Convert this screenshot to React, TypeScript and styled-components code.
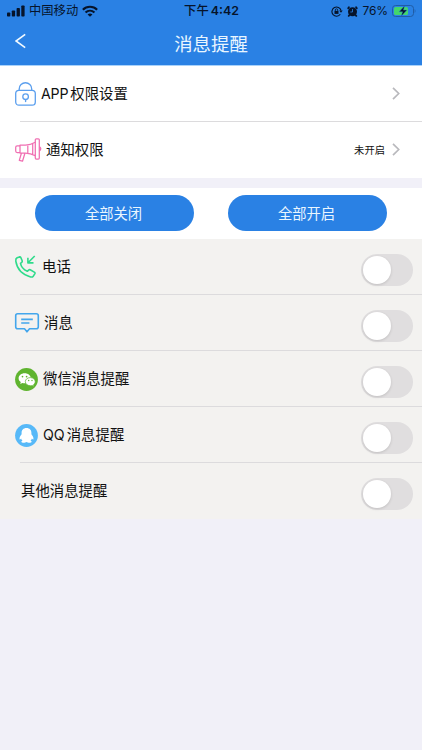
import React from "react";
import styled, { createGlobalStyle } from "styled-components";

const GlobalStyle = createGlobalStyle`
  * { box-sizing: border-box; }
  body {
    margin: 0;
    background: #f1f0f8;
    color: #111;
    font-family: Inter, "Noto Sans CJK SC", sans-serif;
  }
`;

const Screen = styled.main`
  width: 422px;
  height: 750px;
  overflow: hidden;
  background: #f1f0f8;
`;

const Header = styled.header`
  height: 66px;
  background: #2a81e4;
  border-bottom: 1px solid #a9d2fa;
`;

const StatusBar = styled.div`
  height: 22px;
  padding: 0 6px 0 7px;
  display: grid;
  grid-template-columns: 1fr auto 1fr;
  align-items: center;
  color: #06142b;
  font-size: 12.3px;
  line-height: 22px;
  white-space: nowrap;
`;

const StatusGroup = styled.div<{ $end?: boolean }>`
  height: 22px;
  display: flex;
  align-items: center;
  justify-content: ${(p) => (p.$end ? "flex-end" : "flex-start")};
  gap: 4px;
`;

const Percent = styled.span`
  font-size: 12px;
  letter-spacing: -0.1px;
`;

const Clock = styled.div`
  display: flex;
  gap: 2px;
  font-weight: 500;
  b { font-weight: 600; font-size: 12.4px; }
`;

const NavBar = styled.div`
  height: 43px;
  padding: 0 15px;
  display: grid;
  grid-template-columns: 40px 1fr 40px;
  align-items: center;
`;

const BackButton = styled.button`
  width: 12px;
  height: 16px;
  padding: 0;
  margin-bottom: 6px;
  border: 0;
  background: none;
  svg { display: block; }
`;

const Title = styled.h1`
  margin: 0;
  padding-top: 1px;
  text-align: center;
  color: #e9f6ff;
  font-size: 18.4px;
  font-weight: 400;
  line-height: 42px;
`;

const Group = styled.section<{ $tone: string }>`
  background: ${(p) => p.$tone};
`;

const Row = styled.div<{ $last?: boolean }>`
  position: relative;
  height: 56px;
  padding: 0 9px 0 15px;
  display: flex;
  align-items: center;
  &::after {
    content: "";
    display: ${(p) => (p.$last ? "none" : "block")};
    position: absolute;
    left: 20px;
    right: 0;
    bottom: 0;
    height: 1px;
    background: #dcdbdd;
  }
`;

const IconSlot = styled.span<{ $width: number }>`
  width: ${(p) => p.$width}px;
  flex: none;
  display: flex;
  svg { display: block; overflow: visible; }
`;

const Label = styled.span`
  flex: 1;
  display: flex;
  gap: 2px;
  font-size: 14.4px;
  line-height: 22px;
  white-space: nowrap;
`;

const Latin = styled.span<{ $tight?: boolean }>`
  font-size: 14.2px;
  letter-spacing: ${(p) => (p.$tight ? "-0.2px" : "0")};
`;

const Value = styled.span`
  font-size: 10.3px;
  margin: 0 7px 2px 0;
`;

const ChevronSlot = styled.span`
  display: flex;
  margin: 0 13px 2px 0;
`;

const Actions = styled.div`
  height: 51px;
  margin-top: 10px;
  padding: 7px 35px 0;
  display: flex;
  justify-content: space-between;
  background: #fff;
`;

const PillButton = styled.button`
  width: 159px;
  height: 36px;
  padding: 2px 2px 0 0;
  border: 0;
  border-radius: 18px;
  background: #2a81e4;
  color: #e9f6ff;
  font: inherit;
  font-size: 14.3px;
  line-height: 34px;
`;

const Toggle = styled.button`
  width: 52px;
  height: 32px;
  margin-top: 6px;
  padding: 2px;
  border: 0;
  border-radius: 16px;
  background: #e0dedf;
  display: flex;
  align-items: center;
`;

const Knob = styled.span`
  width: 28px;
  height: 28px;
  border-radius: 50%;
  background: #fff;
  box-shadow: 0 1px 3px rgba(0, 0, 0, 0.14);
`;

const SignalIcon = () => (
  <svg width="18" height="12" viewBox="0 0 18 12" fill="#06142b">
    <rect x="0" y="7.5" width="3.3" height="4" rx="0.8" />
    <rect x="4.8" y="5.4" width="3.3" height="6.1" rx="0.8" />
    <rect x="9.6" y="3" width="3.3" height="8.5" rx="0.8" />
    <rect x="14.3" y="0.5" width="3.3" height="11" rx="0.8" />
  </svg>
);

const WifiIcon = () => (
  <svg width="16" height="12" viewBox="0 0 15 11" fill="none" stroke="#06142b" strokeWidth="2">
    <path d="M.8 4.3C4.5.6 10.5.6 14.2 4.3" />
    <path d="M3.3 7C5.7 4.7 9.3 4.7 11.7 7" />
    <path d="M7.5 11 5.2 8.7q2.3-1.8 4.6 0z" fill="#06142b" stroke="none" />
  </svg>
);

const RotationLockIcon = () => (
  <svg width="12" height="11" viewBox="0 0 12 11" fill="none" stroke="#06142b" strokeWidth="1.1">
    <path d="M9.3 8.3A4.6 4.6 0 1 1 10 4.5" />
    <path d="m8.2 4.4 3.5.1L10 6.7z" fill="#06142b" stroke="none" />
    <rect x="3.5" y="4.9" width="4" height="3" fill="#06142b" stroke="none" />
    <path d="M4.3 5V4a1.2 1.2 0 0 1 2.4 0v1" strokeWidth=".8" />
  </svg>
);

const AlarmIcon = () => (
  <svg width="11" height="11" viewBox="0 0 11 11">
    <circle cx="5.5" cy="5.8" r="4.5" fill="#06142b" />
    <path d="M1.9 1.3 1.2 2.3M9.1 1.3l.7 1M2.2 9.2l-.5.7M8.8 9.2l.5.7" stroke="#06142b" strokeWidth="1.8" strokeLinecap="round" />
    <path d="M5.5 3v3H3.3" stroke="#2a81e4" strokeWidth=".8" fill="none" />
  </svg>
);

const BatteryIcon = () => (
  <svg width="24" height="12" viewBox="0 0 24 12">
    <rect x=".5" y=".5" width="21" height="11" rx="3" fill="none" stroke="#205ca5" />
    <rect x="2" y="2" width="14" height="8" rx="1.5" fill="#43d66b" />
    <path d="M22.7 4q1.5 2 0 4z" fill="#205ca5" />
    <path d="m12.6.8-5.5 6h3.5L9.2 11.3l5.8-6.2h-3.5z" fill="#06142b" stroke="#2a81e4" strokeWidth=".4" />
  </svg>
);

const BackIcon = () => (
  <svg width="12" height="16" viewBox="0 0 12 16" fill="none" stroke="#f2faff" strokeWidth="1.6">
    <path d="M10.2 1.3 1 8l9.2 6.7" />
  </svg>
);

const ChevronIcon = () => (
  <svg width="8" height="13" viewBox="0 0 8 13" fill="none" stroke="#b9b9bd" strokeWidth="1.7">
    <path d="m1 .8 5.7 5.7L1 12.2" />
  </svg>
);

const LockIcon = () => (
  <svg width="21" height="24" viewBox="0 0 21 24" fill="none" stroke="#5b9fee" strokeWidth="1.3">
    <rect x=".7" y="8.4" width="19.6" height="14.8" rx="3.2" />
    <path d="M4.2 8.2V7a6.2 6.2 0 0 1 12.5 0v1.2" />
    <circle cx="10.6" cy="14.7" r="2.8" />
    <path d="M10.6 17.5v2.6" />
  </svg>
);

const MegaphoneIcon = () => (
  <svg width="27" height="24" viewBox="0 0 27 24" fill="none" stroke="#f06fb2" strokeWidth="1.25" strokeLinejoin="round">
    <rect x="20.3" y=".8" width="4" height="20.2" rx="1" />
    <path d="M20.3 4.3C17 6.2 14 7 10.5 7H5v8h5.5c3.5 0 6.5.8 9.8 2.6M5 7.8H2.2Q.7 7.8.7 9.2v3.9q0 1.5 1.5 1.5H5M12.8 7v8.2M17.7 5.7v10.7M6.4 15.2 4.3 22.4l3.2.8 2.4-8" />
    <path d="M24.5 8.8q2.6 2 0 4.1" fill="#f06fb2" />
  </svg>
);

const CallIcon = () => (
  <svg width="21" height="22" viewBox="0 0 21 22" fill="none" stroke="#2fdb8b" strokeWidth="1.6" strokeLinejoin="round">
    <path d="M2.1 1.8 4.4.9q1-.2 1.5.8l1.3 3.1q.3.9-.4 1.5L5.5 7.4c.7 3.6 3.3 6.3 6.8 7.9l1.3-1.2q.8-.7 1.6-.3l4.1 2.3q1.2.7.5 1.8l-1.6 2.3q-.9 1.2-2.6.7C7.4 18.6 2 12.8.8 5.1.6 3.8.8 2.5 2.1 1.8z" />
    <path d="M19.7 0 13.5 6.2M12.9 1.7v5.2h5.6" />
  </svg>
);

const MessageIcon = () => (
  <svg width="24" height="20" viewBox="0 0 24 20" fill="none" stroke="#43a6ec" strokeWidth="1.6" strokeLinejoin="round">
    <path d="M2.7.8h18.6q2 0 2 2v11q0 2-2 2h-6.8L12 18.8l-2.5-3H2.7q-2 0-2-2v-11q0-2 2-2z" />
    <path d="M6.2 6.4h11.6M6.2 10h8.2" />
  </svg>
);

const WechatIcon = () => (
  <svg width="23" height="23" viewBox="0 0 23 23">
    <circle cx="11.5" cy="11.5" r="11.4" fill="#5fb42f" />
    <path d="M9.6 5.2c-3.4 0-6 2.2-6 5 0 1.6.8 2.9 2.2 3.8l-.6 2 2.2-1.1q1.1.3 2.4.3c3.4 0 6-2.2 6-5s-2.7-5-6.2-5z" fill="#fff" />
    <path d="M15.3 9.6c-2.8 0-5 1.8-5 4s2.2 4.1 5 4.1q1 0 1.9-.3l1.8 1-.5-1.7c1-.7 1.7-1.8 1.7-3.1 0-2.2-2.2-4-4.9-4z" fill="#fff" stroke="#5fb42f" strokeWidth=".7" />
    <g fill="#5fb42f">
      <circle cx="7.5" cy="8.6" r=".85" />
      <circle cx="11.6" cy="8.6" r=".85" />
      <circle cx="13.7" cy="12.5" r=".7" />
      <circle cx="17" cy="12.5" r=".7" />
    </g>
  </svg>
);

const QqIcon = () => (
  <svg width="23" height="23" viewBox="0 0 23 23">
    <circle cx="11.5" cy="11.5" r="11.4" fill="#57b9f8" />
    <path d="M11.5 4C8.3 4 6.6 6.2 6.6 8.7v1.5c-1.3 1.5-2.4 3.2-2 5 .1.8.8.4 1.5-.7.2.9.7 1.7 1.4 2.3-.9.3-1.3.8-1.1 1.3.4 1 4 .8 5.1 0 1.1.8 4.7 1 5.1 0 .2-.5-.2-1-1.1-1.3.7-.6 1.2-1.4 1.4-2.3.7 1.1 1.4 1.5 1.5.7.4-1.8-.7-3.5-2-5V8.7C16.4 6.2 14.7 4 11.5 4z" fill="#fff" />
  </svg>
);

const reminders = [
  { latin: "", name: "电话", icon: <CallIcon />, width: 27 },
  { latin: "", name: "消息", icon: <MessageIcon />, width: 29 },
  { latin: "", name: "微信消息提醒", icon: <WechatIcon />, width: 28 },
  { latin: "QQ", name: "消息提醒", icon: <QqIcon />, width: 28 },
  { latin: "", name: "其他消息提醒", icon: null, width: 6 },
];

export default function App() {
  return (
    <>
      <GlobalStyle />
      <Screen>
        <Header>
          <StatusBar>
            <StatusGroup>
              <SignalIcon />
              <span>中国移动</span>
              <WifiIcon />
            </StatusGroup>
            <Clock><span>下午</span><b>4:42</b></Clock>
            <StatusGroup $end>
              <RotationLockIcon />
              <AlarmIcon />
              <Percent>76%</Percent>
              <BatteryIcon />
            </StatusGroup>
          </StatusBar>
          <NavBar>
            <BackButton aria-label="返回"><BackIcon /></BackButton>
            <Title>消息提醒</Title>
          </NavBar>
        </Header>

        <Group $tone="#fff">
          <Row>
            <IconSlot $width={26}><LockIcon /></IconSlot>
            <Label><Latin $tight>APP</Latin><span>权限设置</span></Label>
            <ChevronSlot><ChevronIcon /></ChevronSlot>
          </Row>
          <Row $last>
            <IconSlot $width={31}><MegaphoneIcon /></IconSlot>
            <Label>通知权限</Label>
            <Value>未开启</Value>
            <ChevronSlot><ChevronIcon /></ChevronSlot>
          </Row>
        </Group>

        <Actions>
          <PillButton>全部关闭</PillButton>
          <PillButton>全部开启</PillButton>
        </Actions>

        <Group $tone="#f3f2f0">
          {reminders.map((item, index) => (
            <Row key={item.name + item.latin} $last={index === reminders.length - 1}>
              <IconSlot $width={item.width}>{item.icon}</IconSlot>
              <Label>
                {item.latin && <Latin>{item.latin}</Latin>}
                <span>{item.name}</span>
              </Label>
              <Toggle role="switch" aria-checked={false} aria-label={item.name}><Knob /></Toggle>
            </Row>
          ))}
        </Group>
      </Screen>
    </>
  );
}
